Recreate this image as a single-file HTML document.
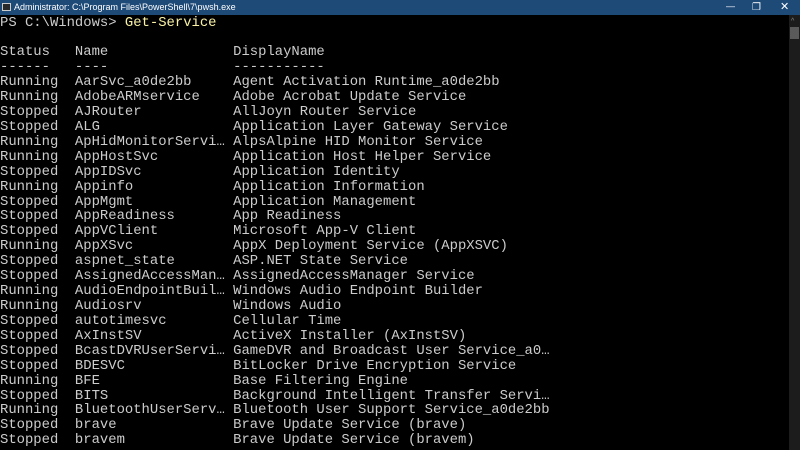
<!DOCTYPE html>
<html><head><meta charset="utf-8"><style>
html,body{margin:0;padding:0;width:800px;height:450px;background:#000;overflow:hidden}
.title{position:absolute;left:0;top:0;width:800px;height:15px;background:#1e4a78;color:#fff;font:9px "Liberation Sans",sans-serif;line-height:15px}
.title span{position:absolute;left:14px;top:0}
.ic{position:absolute;left:2px;top:3px;width:9px;height:8px;background:#2a2a2a;border:1px solid #ccc;box-sizing:border-box}
.sb{position:absolute;left:789px;top:15px;width:11px;height:435px;background:#1c1c1c}
.th{position:absolute;left:790px;top:27px;width:9px;height:12px;background:#5a5a5a}
pre{position:absolute;left:0;top:15.5px;margin:0;font:13.88px/14.92px "Liberation Mono",monospace;color:#cccccc;letter-spacing:0}
.y{color:#f9f1a5}
</style></head><body>
<div class="title"><div class="ic"></div><span>Administrator: C:\Program Files\PowerShell\7\pwsh.exe</span>
<span style="left:726px;top:-1px">&#8212;</span><span style="left:752px;font-size:10px">&#10064;</span><span style="left:780px;font-size:11px">&#10005;</span></div>
<div class="sb"></div><div class="th"></div>
<div style="position:absolute;left:791px;top:18px;color:#888;font:7px sans-serif">^</div>
<pre>PS C:\Windows&gt; <span class="y">Get-Service</span>

Status   Name               DisplayName
------   ----               -----------
Running  AarSvc_a0de2bb     Agent Activation Runtime_a0de2bb
Running  AdobeARMservice    Adobe Acrobat Update Service
Stopped  AJRouter           AllJoyn Router Service
Stopped  ALG                Application Layer Gateway Service
Running  ApHidMonitorServi… AlpsAlpine HID Monitor Service
Running  AppHostSvc         Application Host Helper Service
Stopped  AppIDSvc           Application Identity
Running  Appinfo            Application Information
Stopped  AppMgmt            Application Management
Stopped  AppReadiness       App Readiness
Stopped  AppVClient         Microsoft App-V Client
Running  AppXSvc            AppX Deployment Service (AppXSVC)
Stopped  aspnet_state       ASP.NET State Service
Stopped  AssignedAccessMan… AssignedAccessManager Service
Running  AudioEndpointBuil… Windows Audio Endpoint Builder
Running  Audiosrv           Windows Audio
Stopped  autotimesvc        Cellular Time
Stopped  AxInstSV           ActiveX Installer (AxInstSV)
Stopped  BcastDVRUserServi… GameDVR and Broadcast User Service_a0…
Stopped  BDESVC             BitLocker Drive Encryption Service
Running  BFE                Base Filtering Engine
Stopped  BITS               Background Intelligent Transfer Servi…
Running  BluetoothUserServ… Bluetooth User Support Service_a0de2bb
Stopped  brave              Brave Update Service (brave)
Stopped  bravem             Brave Update Service (bravem)</pre>
</body></html>
